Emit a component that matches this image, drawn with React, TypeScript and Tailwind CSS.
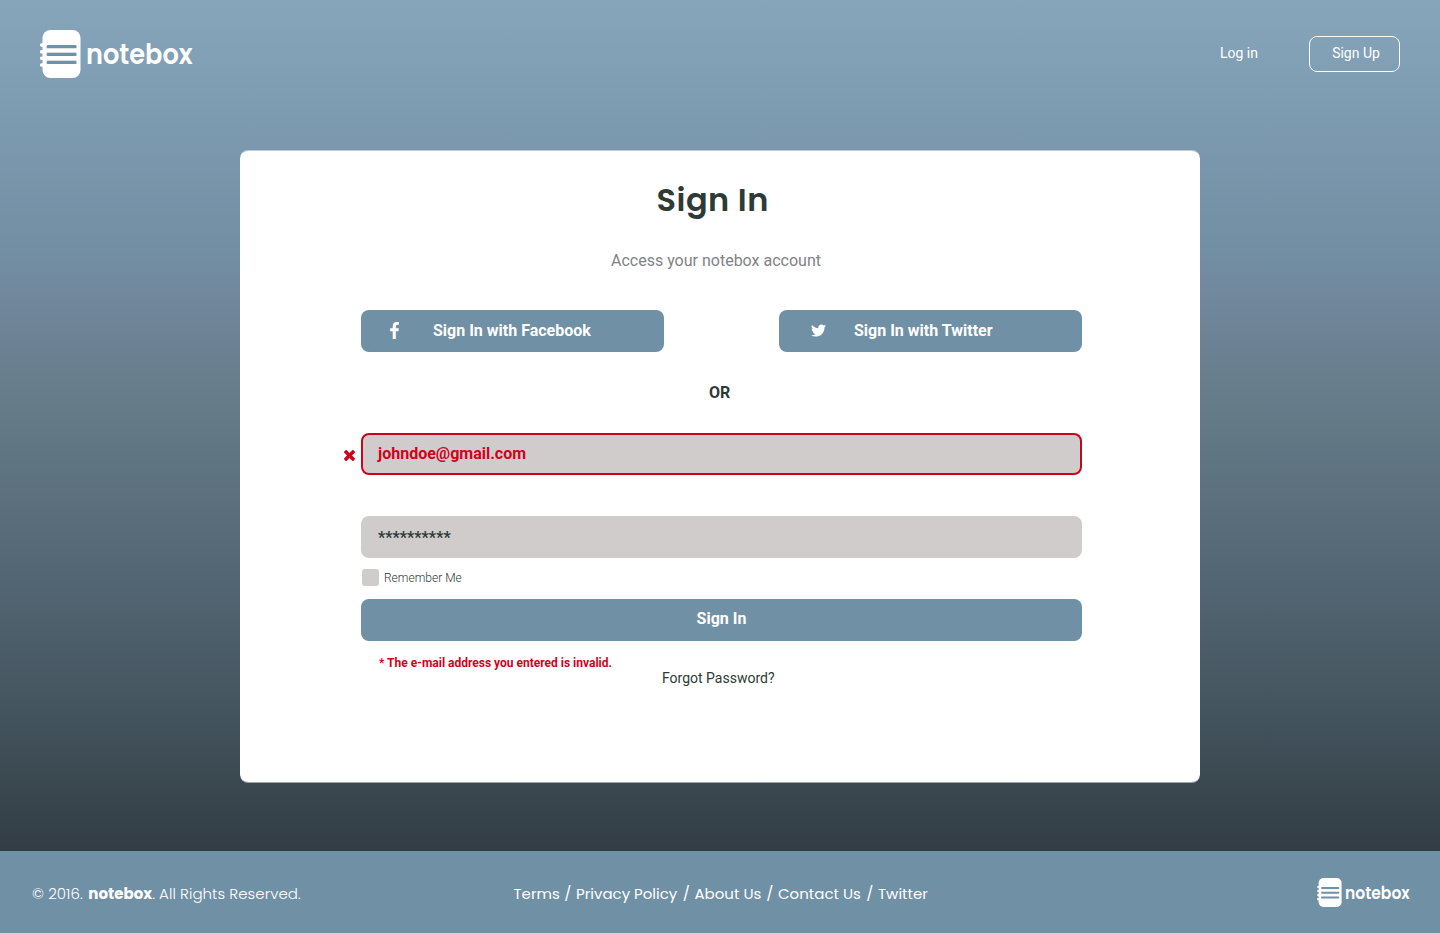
const poppins = "font-['Poppins','Lato','Open_Sans',sans-serif]";

function NotebookIcon({ className }: { className: string }) {
  return (
    <svg viewBox="0 0 41 48" className={className} fill="none" aria-hidden="true">
      <rect x="2.5" y="0" width="38" height="48" rx="8" fill="#fff" />
      <path d="M1.7 15H7M1.7 21.7H7M1.7 28.3H7M1.7 35H7" stroke="#fff" strokeWidth="3.5" strokeLinecap="round" />
      <path d="M7.5 17.6H35.5M7.5 23.2H35.5M7.5 31.1H35.5" stroke="#d6d8da" strokeWidth="2.4" strokeLinecap="round" />
      <path d="M8 16.5H35.2M8 24.5H35.2M8 32.4H35.2" stroke="#7090a6" strokeWidth="3" strokeLinecap="round" />
    </svg>
  );
}

function FacebookIcon() {
  return (
    <svg viewBox="97 0 862 1664" className="mb-px h-[17px] w-[9px]" fill="currentColor" aria-hidden="true">
      <path d="M959 12v264H802q-86 0-115 36t-29 108v189h293l-39 296H658v759H352V905H97V609h255V391q0-186 104-288.5T733 0q147 0 226 12z" />
    </svg>
  );
}

function TwitterIcon() {
  return (
    <svg viewBox="44 256 1576 1280" className="h-[13px] w-[15px]" fill="currentColor" aria-hidden="true">
      <path d="M1620 408q-67 98-162 167 1 14 1 42 0 130-38 259.5T1305.5 1125 1121 1335.5t-258 146-323 54.5q-271 0-496-145 35 4 78 4 225 0 401-138-105-2-188-64.5T221 1033q33 5 61 5 43 0 85-11-112-23-185.5-111.5T108 710v-4q68 38 146 41-66-44-105-115t-39-154q0-88 44-163 121 149 294.5 238.5T820 653q-8-38-8-74 0-134 94.5-228.5T1135 256q140 0 236 102 109-21 205-78-37 115-142 178 93-10 186-50z" />
    </svg>
  );
}

function ErrorIcon() {
  return (
    <svg viewBox="302 366 1188 1188" className="ml-px mr-[6px] mt-[17px] h-[11px] w-[11px] text-[#d0021b]" fill="currentColor" aria-hidden="true">
      <path d="M1490 1322q0 40-28 68l-136 136q-28 28-68 28t-68-28l-294-294-294 294q-28 28-68 28t-68-28l-136-136q-28-28-28-68t28-68l294-294-294-294q-28-28-28-68t28-68l136-136q28-28 68-28t68 28l294 294 294-294q28-28 68-28t68 28l136 136q28 28 28 68t-28 68l-294 294 294 294q28 28 28 68z" />
    </svg>
  );
}

const links = [
  { label: "Terms", width: "w-[62.5px]" },
  { label: "Privacy Policy", width: "w-[118.5px]" },
  { label: "About Us", width: "w-[83.5px]" },
  { label: "Contact Us", width: "w-[100px]" },
  { label: "Twitter", width: "w-[50px]" },
];

export default function App() {
  return (
    <div className="flex h-[933px] w-[1440px] flex-col overflow-hidden font-['Roboto',sans-serif] text-[#2d3a36]">
      <div className="flex h-[851px] flex-col bg-[linear-gradient(180deg,#86a5bb_0%,#728ea3_30%,#71879c_35%,#657b88_48%,#566977_65%,#455660_82%,#323d44_100%)]">
        <header className="flex h-[150px] items-start justify-between pl-10 pr-10 text-white">
          <div className="flex pt-[30px]">
            <NotebookIcon className="h-12 w-[41px]" />
            <span className={`${poppins} ml-[4.5px] mt-[6px] origin-left scale-x-[0.915] whitespace-nowrap text-[28px] font-semibold leading-[38px]`}>notebox</span>
          </div>
          <nav className="flex pt-9 text-sm">
            <a className="mr-[51px] leading-[35px]">Log in</a>
            <button className="flex h-9 w-[91px] justify-center rounded-lg border border-white pl-[3px] leading-[33px]">Sign Up</button>
          </nav>
        </header>

        <main className="ml-[240px] flex h-[633px] w-[960px] flex-col rounded-lg border-y border-white/50 bg-white bg-clip-padding pl-[121px]">
          <h1 className={`${poppins} ml-[295.5px] mt-[26px] whitespace-nowrap text-[32px] font-semibold leading-[46px] tracking-[0.5px]`}>Sign In</h1>
          <p className="ml-[250px] mt-[26px] h-6 text-base leading-6 text-[#808386]">Access your notebox account</p>
          <div className="mt-[37px] flex w-[721px] justify-between text-base font-bold text-white">
            <button className="flex h-[42px] w-[303px] items-center rounded-lg bg-[#7090a6] pb-px pl-[29px]">
              <FacebookIcon />
              <span className="ml-[34px]">Sign In with Facebook</span>
            </button>
            <button className="flex h-[42px] w-[303px] items-center rounded-lg bg-[#7090a6] pb-px pl-[32px]">
              <TwitterIcon />
              <span className="ml-[28px]">Sign In with Twitter</span>
            </button>
          </div>
          <p className="ml-[348px] mt-[29px] h-6 text-base font-bold leading-6">OR</p>
          <div className="-ml-[18px] mt-[28px] flex">
            <ErrorIcon />
            <div className="h-[42px] w-[721px] rounded-lg border-2 border-[#d0021b] bg-[#d0cccb] pl-[15px] text-base font-bold leading-[37px] text-[#d0021b]">johndoe@gmail.com</div>
          </div>
          <div className="mt-[41px] h-[42px] w-[721px] rounded-lg bg-[#d0cccb] pl-[17px] text-base font-bold leading-[44px]">**********</div>
          <label className="ml-px mt-[11px] flex h-[17px] text-xs font-light leading-[19px]">
            <span className="mr-[5px] h-[17px] w-[17px] rounded-[3px] bg-[#d0cccb]" />
            Remember Me
          </label>
          <button className="mt-[13px] h-[42px] w-[721px] rounded-lg bg-[#7090a6] text-base font-bold leading-[40px] text-white"><span className="block h-[42px]">Sign In</span></button>
          <p className="ml-[18px] mt-[14px] h-4 text-xs font-bold leading-4 text-[#d0021b]">* The e-mail address you entered is invalid.</p>
          <a className="ml-[301px] -mt-px text-sm leading-4">Forgot Password?</a>
        </main>
      </div>

      <footer className={`${poppins} flex h-[82px] items-start bg-[#7090a6] pl-8 text-white`}>
        <p className="mt-[31px] w-[481.5px] whitespace-nowrap text-[15px] font-light leading-6 tracking-[0.05px]">© 2016. <b className="ml-[1.3px] font-bold">notebox</b>. All Rights Reserved.</p>
        <nav className="mt-[31px] flex w-[803.5px] whitespace-nowrap text-[15px] leading-6">
          {links.map(({ label, width }, i) => (
            <span key={label} className={`flex shrink-0 justify-between ${width}`}>
              <a>{label}</a>
              {i < links.length - 1 && <span className="mr-[4.5px]">/</span>}
            </span>
          ))}
        </nav>
        <div className="mt-[27px] flex">
          <NotebookIcon className="h-[29px] w-[25px]" />
          <span className="ml-[2.5px] mt-[2.5px] origin-left scale-x-[0.915] text-[17px] font-semibold leading-6">notebox</span>
        </div>
      </footer>
    </div>
  );
}
